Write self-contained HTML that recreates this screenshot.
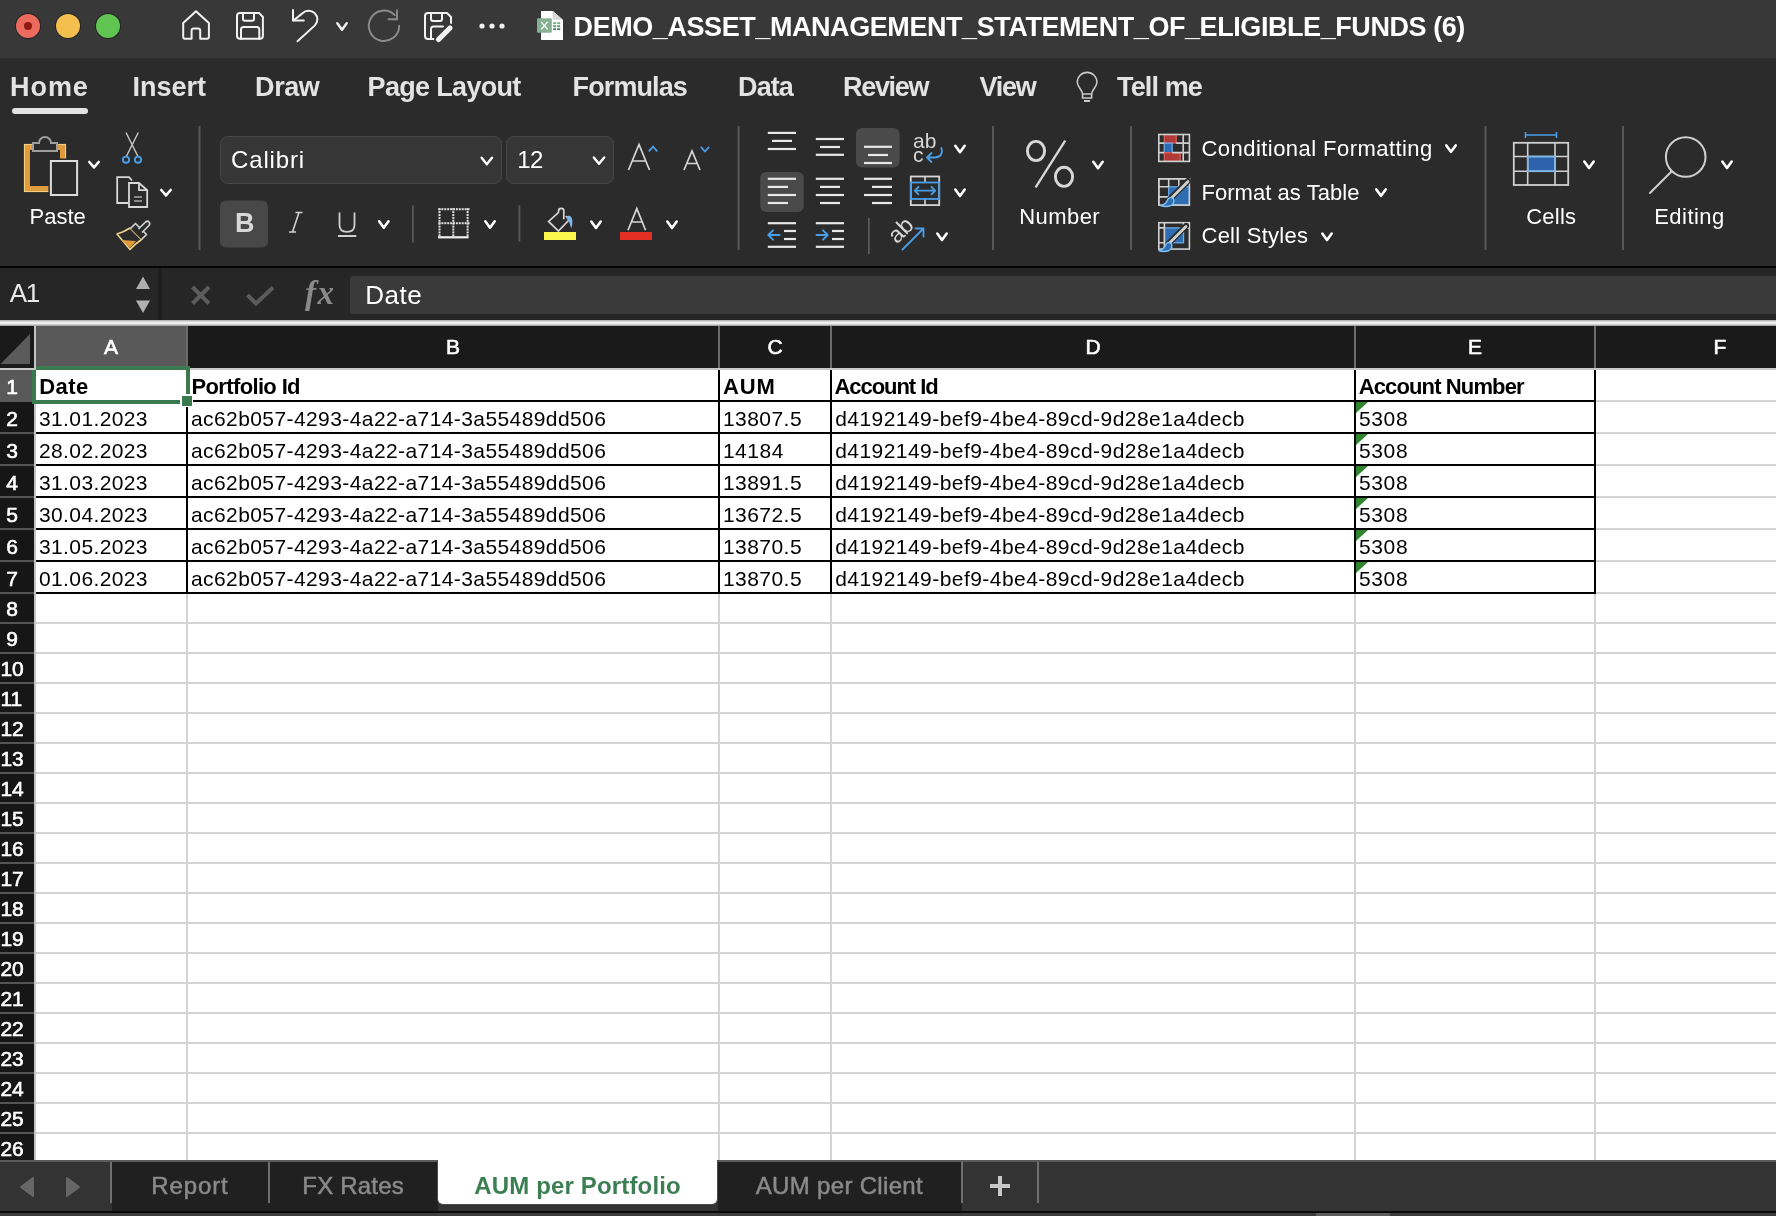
<!DOCTYPE html>
<html><head><meta charset="utf-8"><style>
html,body{margin:0;padding:0;}
body{width:1776px;height:1216px;overflow:hidden;position:relative;background:#2b2b2b;font-family:"Liberation Sans",sans-serif;}
#w{position:absolute;left:0;top:0;width:1776px;height:1216px;will-change:transform;}
#w>div,#w>span,#w>svg{position:absolute;}
.t{white-space:nowrap;}
</style></head><body>
<div id="w">
<div style="left:0px;top:0px;width:1776px;height:58px;background:#383838;"></div>
<div style="left:0px;top:58px;width:1776px;height:208px;background:#2b2b2b;"></div>
<div style="left:0px;top:266px;width:1776px;height:2px;background:#050505;"></div>
<div style="left:0px;top:268px;width:1776px;height:52px;background:#262626;"></div>
<div style="left:0px;top:320px;width:1776px;height:6px;background:#cfcfcf;background:linear-gradient(#a8a8a8,#f0f0f0 40%,#ececec 60%,#9a9a9a)"></div>
<svg style="left:0;top:0;position:absolute" width="1776" height="330" viewBox="0 0 1776 330"><g fill="none" stroke="#f2f2f2" stroke-width="2" stroke-linejoin="round" stroke-linecap="round"><path d="M191.6,38.8 H185 Q183.2,38.8 183.2,37 V23 L196,11.2 L208.9,23 V37 Q208.9,38.8 207,38.8 H200.2 V30.5 Q200.2,28.4 198,28.4 H193.8 Q191.6,28.4 191.6,30.5 Z"/><path d="M240,12.9 H259 L262.9,17 V35.8 Q262.9,38.8 260,38.8 H240 Q237,38.8 237,35.8 V15.9 Q237,12.9 240,12.9 Z"/><path d="M243,12.9 V19 Q243,20.8 245,20.8 H252 Q254,20.8 254,19 V12.9"/><path d="M241,38.8 V29.5 Q241,27 243.5,27 H256.8 Q259.3,27 259.3,29.5 V38.8"/><path d="M293,10 V20.6 H303.8"/><path d="M293.5,20.5 L302.35,13.35 A8.7,8.7 0 1 1 314.65,25.65 L297.5,41.3"/></g><path d="M337.3,23.3 L342,29.7 L346.7,23.3" fill="none" stroke="#f2f2f2" stroke-width="2.4" stroke-linecap="round" stroke-linejoin="round"/><g fill="none" stroke="#8c8c8c" stroke-width="1.9" stroke-linecap="round"><path d="M399.2,25.8 A15.2,15.2 0 1 1 394.8,15.1"/><path d="M397,10.2 V19.2 H388.5"/></g><g fill="none" stroke="#f2f2f2" stroke-width="2" stroke-linejoin="round" stroke-linecap="round"><path d="M436,39 H428 Q425,39 425,36 V16 Q425,13 428,13 H447 L451,17 V24"/><path d="M431,13 V19 Q431,21 433,21 H440 Q442,21 442,19 V13"/><path d="M431,39 V29 Q431,26.5 433.5,26.5 H443"/></g><path d="M438.5,39.5 L450,28" stroke="#383838" stroke-width="9" stroke-linecap="round"/><path d="M438.5,39.5 L450,28" stroke="#f2f2f2" stroke-width="5.2" stroke-linecap="round"/><circle cx="482" cy="26" r="2.6" fill="#f2f2f2"/><circle cx="492" cy="26" r="2.6" fill="#f2f2f2"/><circle cx="502" cy="26" r="2.6" fill="#f2f2f2"/><path d="M541,11 H552.7 L563,20 V40 H541 Z" fill="#ffffff"/><path d="M552.7,11 V19.8 H563 Z" fill="#d8d8d8"/><rect x="537" y="18.2" width="14.8" height="14.6" rx="1.2" fill="#86b293"/><path d="M541.2,21.8 L547.6,29.4 M547.6,21.8 L541.2,29.4" stroke="#fff" stroke-width="1.3"/><rect x="553.2" y="22.2" width="3" height="1.9" fill="#6fb187"/><rect x="557.2" y="22.2" width="3" height="1.9" fill="#6fb187"/><rect x="553.2" y="25.2" width="3" height="1.9" fill="#5e9f76"/><rect x="557.2" y="25.2" width="3" height="1.9" fill="#5e9f76"/><rect x="553.2" y="28.2" width="3" height="1.9" fill="#4f7d60"/><rect x="557.2" y="28.2" width="3" height="1.9" fill="#4f7d60"/><g fill="none" stroke="#c9c9c9" stroke-width="1.6"><path d="M1082.6,94 C1082.2,89.5 1077.3,87 1077.3,82.2 A9.8,9.8 0 1 1 1096.9,82.2 C1096.9,87 1092,89.5 1091.6,94 Z"/><path d="M1082.6,94 V98 H1091.6 V94"/></g><rect x="1084" y="100" width="6" height="2" fill="#c9c9c9"/><rect x="27" y="147" width="36" height="42" fill="none" stroke="#e09b3c" stroke-width="6"/><rect x="24.4" y="144.4" width="41.2" height="47.2" fill="none" stroke="#f5d68c" stroke-width="1"/><path d="M33,151 V143 H39 A6,6 0 0 1 51,143 H57 V151 Z" fill="#2b2b2b" stroke="#9e9e9e" stroke-width="2"/><rect x="50.9" y="161" width="26.2" height="34" fill="#2b2b2b" stroke="#2b2b2b" stroke-width="5"/><rect x="50.9" y="161" width="26.2" height="34" fill="none" stroke="#dcdcdc" stroke-width="2"/><path d="M89.3,162.0 L94,167.39999999999998 L98.7,162.0" fill="none" stroke="#ffffff" stroke-width="2.6" stroke-linecap="round" stroke-linejoin="round"/><path d="M126,132.5 L138,156.5 M138.3,132.5 L126.3,156.5" stroke="#c8c8c8" stroke-width="1.4"/><circle cx="126" cy="159.7" r="3.1" fill="none" stroke="#4a9ee8" stroke-width="1.9"/><circle cx="138" cy="159.7" r="3.1" fill="none" stroke="#4a9ee8" stroke-width="1.9"/><path d="M128.5,203 H117.2 V177.2 H129 L132,180.5" fill="none" stroke="#d8d8d8" stroke-width="1.8"/><path d="M129,183 H139 L147.2,190.2 V207 H129 Z" fill="none" stroke="#d8d8d8" stroke-width="1.8"/><path d="M139,183 V190.2 H147.2" fill="none" stroke="#d8d8d8" stroke-width="1.8"/><path d="M134,197 H142 M134,201 H142" stroke="#a8a8a8" stroke-width="1.7"/><path d="M161.3,190.0 L166,195.39999999999998 L170.7,190.0" fill="none" stroke="#ffffff" stroke-width="2.6" stroke-linecap="round" stroke-linejoin="round"/><path d="M117,234 Q124,232 130,228 L141.5,239.5 Q135,244 130,249.5 Z" fill="none" stroke="#f0d68a" stroke-width="1.6" stroke-linejoin="round"/><path d="M121.5,240 L136,241 Q132.5,245 130,248 Z" fill="#e09b3c"/><path d="M130.5,228.5 L135.5,223.5 L146.5,234.5 L141.5,239.5" fill="#2b2b2b" stroke="#d0d0d0" stroke-width="1.7" stroke-linejoin="round"/><path d="M138.5,229 L145.5,222 Q147.5,220.5 149,222 Q150.5,223.5 149,225.5 L142,232.5" fill="#2b2b2b" stroke="#d0d0d0" stroke-width="1.7" stroke-linejoin="round"/><rect x="198.5" y="126" width="2" height="124" fill="#585858"/><rect x="220.5" y="136.5" width="281" height="47" rx="7" fill="#363636" stroke="#474747" stroke-width="1"/><rect x="506.5" y="136.5" width="107" height="47" rx="7" fill="#363636" stroke="#474747" stroke-width="1"/><path d="M481.6,157.8 L486.8,164.2 L492.0,157.8" fill="none" stroke="#ffffff" stroke-width="2.4" stroke-linecap="round" stroke-linejoin="round"/><path d="M593.8,157.4 L599,163.79999999999998 L604.2,157.4" fill="none" stroke="#ffffff" stroke-width="2.4" stroke-linecap="round" stroke-linejoin="round"/><path d="M628.5,170 L639,144.5 L649.5,170 M632.3,161 H645.7" fill="none" stroke="#d6d6d6" stroke-width="1.7"/><path d="M648.8,151.3 L653,146.6 L657.2,151.3" fill="none" stroke="#4a9ee8" stroke-width="1.8"/><path d="M684,170 L692,151 L700,170 M687,163.5 H697" fill="none" stroke="#d6d6d6" stroke-width="1.7"/><path d="M700.8,146.8 L705,151.5 L709.2,146.8" fill="none" stroke="#4a9ee8" stroke-width="1.8"/><rect x="220" y="200.5" width="48" height="47" rx="6" fill="#484848"/><path d="M289,232 H296 M295.5,212.5 H302.5 M299,212.5 L292.5,232" fill="none" stroke="#d0d0d0" stroke-width="1.6"/><path d="M339.5,212.5 V225 Q339.5,231.8 347,231.8 Q354.5,231.8 354.5,225 V212.5" fill="none" stroke="#d0d0d0" stroke-width="1.8"/><rect x="338" y="235" width="18.3" height="2" fill="#d0d0d0"/><path d="M379.1,221.3 L383.8,227.7 L388.5,221.3" fill="none" stroke="#ffffff" stroke-width="2.6" stroke-linecap="round" stroke-linejoin="round"/><rect x="412" y="205.5" width="1.8" height="37" fill="#5a5a5a"/><rect x="438.5" y="208.2" width="2" height="2" fill="#e0e0e0"/><rect x="438.5" y="222.2" width="2" height="2" fill="#e0e0e0"/><rect x="441.4" y="208.2" width="2" height="2" fill="#e0e0e0"/><rect x="441.4" y="222.2" width="2" height="2" fill="#e0e0e0"/><rect x="444.3" y="208.2" width="2" height="2" fill="#e0e0e0"/><rect x="444.3" y="222.2" width="2" height="2" fill="#e0e0e0"/><rect x="447.2" y="208.2" width="2" height="2" fill="#e0e0e0"/><rect x="447.2" y="222.2" width="2" height="2" fill="#e0e0e0"/><rect x="450.1" y="208.2" width="2" height="2" fill="#e0e0e0"/><rect x="450.1" y="222.2" width="2" height="2" fill="#e0e0e0"/><rect x="453.0" y="208.2" width="2" height="2" fill="#e0e0e0"/><rect x="453.0" y="222.2" width="2" height="2" fill="#e0e0e0"/><rect x="455.9" y="208.2" width="2" height="2" fill="#e0e0e0"/><rect x="455.9" y="222.2" width="2" height="2" fill="#e0e0e0"/><rect x="458.8" y="208.2" width="2" height="2" fill="#e0e0e0"/><rect x="458.8" y="222.2" width="2" height="2" fill="#e0e0e0"/><rect x="461.7" y="208.2" width="2" height="2" fill="#e0e0e0"/><rect x="461.7" y="222.2" width="2" height="2" fill="#e0e0e0"/><rect x="464.6" y="208.2" width="2" height="2" fill="#e0e0e0"/><rect x="464.6" y="222.2" width="2" height="2" fill="#e0e0e0"/><rect x="467.5" y="208.2" width="2" height="2" fill="#e0e0e0"/><rect x="467.5" y="222.2" width="2" height="2" fill="#e0e0e0"/><rect x="438.5" y="208.2" width="2" height="2" fill="#e0e0e0"/><rect x="452.3" y="208.2" width="2" height="2" fill="#e0e0e0"/><rect x="466.6" y="208.2" width="2" height="2" fill="#e0e0e0"/><rect x="438.5" y="211.1" width="2" height="2" fill="#e0e0e0"/><rect x="452.3" y="211.1" width="2" height="2" fill="#e0e0e0"/><rect x="466.6" y="211.1" width="2" height="2" fill="#e0e0e0"/><rect x="438.5" y="214.0" width="2" height="2" fill="#e0e0e0"/><rect x="452.3" y="214.0" width="2" height="2" fill="#e0e0e0"/><rect x="466.6" y="214.0" width="2" height="2" fill="#e0e0e0"/><rect x="438.5" y="216.9" width="2" height="2" fill="#e0e0e0"/><rect x="452.3" y="216.9" width="2" height="2" fill="#e0e0e0"/><rect x="466.6" y="216.9" width="2" height="2" fill="#e0e0e0"/><rect x="438.5" y="219.8" width="2" height="2" fill="#e0e0e0"/><rect x="452.3" y="219.8" width="2" height="2" fill="#e0e0e0"/><rect x="466.6" y="219.8" width="2" height="2" fill="#e0e0e0"/><rect x="438.5" y="222.7" width="2" height="2" fill="#e0e0e0"/><rect x="452.3" y="222.7" width="2" height="2" fill="#e0e0e0"/><rect x="466.6" y="222.7" width="2" height="2" fill="#e0e0e0"/><rect x="438.5" y="225.6" width="2" height="2" fill="#e0e0e0"/><rect x="452.3" y="225.6" width="2" height="2" fill="#e0e0e0"/><rect x="466.6" y="225.6" width="2" height="2" fill="#e0e0e0"/><rect x="438.5" y="228.5" width="2" height="2" fill="#e0e0e0"/><rect x="452.3" y="228.5" width="2" height="2" fill="#e0e0e0"/><rect x="466.6" y="228.5" width="2" height="2" fill="#e0e0e0"/><rect x="438.5" y="231.4" width="2" height="2" fill="#e0e0e0"/><rect x="452.3" y="231.4" width="2" height="2" fill="#e0e0e0"/><rect x="466.6" y="231.4" width="2" height="2" fill="#e0e0e0"/><rect x="438.5" y="234.3" width="2" height="2" fill="#e0e0e0"/><rect x="452.3" y="234.3" width="2" height="2" fill="#e0e0e0"/><rect x="466.6" y="234.3" width="2" height="2" fill="#e0e0e0"/><rect x="438" y="236.2" width="30.6" height="2.2" fill="#f0f0f0"/><path d="M485.3,221.3 L490,227.7 L494.7,221.3" fill="none" stroke="#ffffff" stroke-width="2.6" stroke-linecap="round" stroke-linejoin="round"/><rect x="518.5" y="205.5" width="1.8" height="36" fill="#5a5a5a"/><path d="M558.6,212.3 L548.6,221.4 L558.4,231 L569.4,219.6 L565.8,216" fill="none" stroke="#d6d6d6" stroke-width="1.7" stroke-linejoin="miter"/><path d="M558.6,212.5 V210.8 Q558.6,208.4 561.2,208.4 Q563.8,208.4 563.8,210.8 V219.3" fill="none" stroke="#d6d6d6" stroke-width="1.7"/><path d="M566.8,216.2 Q571.6,214.6 572.4,220.5 Q572.7,224.8 571.2,228.6 Q570.3,223 566.8,218.6 Z" fill="#7db6ea"/><rect x="544" y="232" width="32" height="8" fill="#fbf64c"/><path d="M591.3,221.60000000000002 L596,228.0 L600.7,221.60000000000002" fill="none" stroke="#ffffff" stroke-width="2.6" stroke-linecap="round" stroke-linejoin="round"/><path d="M628,230.3 L636.8,208.6 L645.6,230.3 M631.4,222 H642.2" fill="none" stroke="#d6d6d6" stroke-width="1.7"/><rect x="620" y="232" width="32" height="8" fill="#e42f24"/><path d="M667.3,221.60000000000002 L672,228.0 L676.7,221.60000000000002" fill="none" stroke="#ffffff" stroke-width="2.6" stroke-linecap="round" stroke-linejoin="round"/><rect x="737.6" y="126" width="2" height="124" fill="#585858"/><line x1="767.8" y1="132.9" x2="796" y2="132.9" stroke="#e8e8e8" stroke-width="2.2"/><line x1="772" y1="140.9" x2="792" y2="140.9" stroke="#e8e8e8" stroke-width="2.2"/><line x1="767.8" y1="149" x2="796" y2="149" stroke="#e8e8e8" stroke-width="2.2"/><line x1="815.8" y1="139" x2="844" y2="139" stroke="#e8e8e8" stroke-width="2.2"/><line x1="820" y1="147" x2="840" y2="147" stroke="#e8e8e8" stroke-width="2.2"/><line x1="815.8" y1="154.8" x2="844" y2="154.8" stroke="#e8e8e8" stroke-width="2.2"/><rect x="856" y="128" width="43.6" height="39.6" rx="6" fill="#4a4a4a"/><line x1="864" y1="146.8" x2="892" y2="146.8" stroke="#e8e8e8" stroke-width="2.2"/><line x1="868" y1="155" x2="888" y2="155" stroke="#e8e8e8" stroke-width="2.2"/><line x1="864" y1="163" x2="892" y2="163" stroke="#e8e8e8" stroke-width="2.2"/><text x="913" y="147.5" font-family="Liberation Sans" font-size="21" fill="#d6d6d6">ab</text><text x="913" y="161.5" font-family="Liberation Sans" font-size="21" fill="#d6d6d6">c</text><path d="M941.5,148 Q943.5,157 935,157.5 H927.5 M931.5,153 L927,157.5 L931.5,162" fill="none" stroke="#4a9ee8" stroke-width="1.8" stroke-linecap="round" stroke-linejoin="round"/><path d="M955.3,145.8 L960,152.2 L964.7,145.8" fill="none" stroke="#ffffff" stroke-width="2.6" stroke-linecap="round" stroke-linejoin="round"/><rect x="760.2" y="172" width="43.6" height="40" rx="6" fill="#4a4a4a"/><line x1="767.8" y1="178.8" x2="796" y2="178.8" stroke="#e8e8e8" stroke-width="2.2"/><line x1="767.8" y1="186.9" x2="788" y2="186.9" stroke="#e8e8e8" stroke-width="2.2"/><line x1="767.8" y1="195" x2="796" y2="195" stroke="#e8e8e8" stroke-width="2.2"/><line x1="767.8" y1="203" x2="788" y2="203" stroke="#e8e8e8" stroke-width="2.2"/><line x1="815.8" y1="178.8" x2="844" y2="178.8" stroke="#e8e8e8" stroke-width="2.2"/><line x1="820" y1="186.9" x2="840" y2="186.9" stroke="#e8e8e8" stroke-width="2.2"/><line x1="815.8" y1="195" x2="844" y2="195" stroke="#e8e8e8" stroke-width="2.2"/><line x1="820" y1="203" x2="840" y2="203" stroke="#e8e8e8" stroke-width="2.2"/><line x1="864" y1="178.8" x2="892" y2="178.8" stroke="#e8e8e8" stroke-width="2.2"/><line x1="872" y1="186.9" x2="892" y2="186.9" stroke="#e8e8e8" stroke-width="2.2"/><line x1="864" y1="195" x2="892" y2="195" stroke="#e8e8e8" stroke-width="2.2"/><line x1="872" y1="203" x2="892" y2="203" stroke="#e8e8e8" stroke-width="2.2"/><rect x="910.8" y="176.5" width="28.4" height="28.6" fill="none" stroke="#d6d6d6" stroke-width="1.8"/><path d="M925,176.5 V182.5 M925,199 V205" stroke="#d6d6d6" stroke-width="1.6"/><rect x="910.8" y="182.5" width="28.4" height="16.5" fill="none" stroke="#4a9ee8" stroke-width="1.8"/><path d="M915,190.7 H935 M918.5,187 L914.8,190.7 L918.5,194.4 M931.5,187 L935.2,190.7 L931.5,194.4" fill="none" stroke="#4a9ee8" stroke-width="1.8" stroke-linecap="round" stroke-linejoin="round"/><path d="M955.3,189.60000000000002 L960,196.0 L964.7,189.60000000000002" fill="none" stroke="#ffffff" stroke-width="2.6" stroke-linecap="round" stroke-linejoin="round"/><line x1="767.8" y1="223.2" x2="796" y2="223.2" stroke="#e8e8e8" stroke-width="2.2"/><line x1="784" y1="231" x2="796" y2="231" stroke="#e8e8e8" stroke-width="2.2"/><line x1="784" y1="239" x2="796" y2="239" stroke="#e8e8e8" stroke-width="2.2"/><line x1="767.8" y1="246.8" x2="796" y2="246.8" stroke="#e8e8e8" stroke-width="2.2"/><path d="M768.5,235 H779.5 M773,230.3 L768.3,235 L773,239.7" fill="none" stroke="#4a9ee8" stroke-width="1.9" stroke-linecap="round" stroke-linejoin="round"/><line x1="815.8" y1="223.2" x2="844" y2="223.2" stroke="#e8e8e8" stroke-width="2.2"/><line x1="832" y1="231" x2="844" y2="231" stroke="#e8e8e8" stroke-width="2.2"/><line x1="832" y1="239" x2="844" y2="239" stroke="#e8e8e8" stroke-width="2.2"/><line x1="815.8" y1="246.8" x2="844" y2="246.8" stroke="#e8e8e8" stroke-width="2.2"/><path d="M816.5,235 H827.5 M823,230.3 L827.7,235 L823,239.7" fill="none" stroke="#4a9ee8" stroke-width="1.9" stroke-linecap="round" stroke-linejoin="round"/><rect x="868" y="218" width="1.8" height="36" fill="#5a5a5a"/><text x="0" y="0" font-family="Liberation Sans" font-size="23" fill="#d6d6d6" transform="translate(897,244.5) rotate(-45)">ab</text><path d="M902.5,249.5 L923,229 M915.5,228.5 H923.5 V236.5" fill="none" stroke="#4a9ee8" stroke-width="1.8" stroke-linecap="round" stroke-linejoin="round"/><path d="M937.3,233.5 L942,239.89999999999998 L946.7,233.5" fill="none" stroke="#ffffff" stroke-width="2.6" stroke-linecap="round" stroke-linejoin="round"/><rect x="992" y="126" width="2" height="124" fill="#585858"/><ellipse cx="1036" cy="151" rx="8.6" ry="9.6" fill="none" stroke="#d8d8d8" stroke-width="2.9"/><ellipse cx="1064" cy="176.8" rx="8.6" ry="9.6" fill="none" stroke="#d8d8d8" stroke-width="2.9"/><path d="M1065.2,140.6 L1035.6,187.4" stroke="#d8d8d8" stroke-width="2.3"/><path d="M1093.3,161.8 L1098,168.2 L1102.7,161.8" fill="none" stroke="#ffffff" stroke-width="2.6" stroke-linecap="round" stroke-linejoin="round"/><rect x="1130" y="126" width="2" height="124" fill="#585858"/><rect x="1164.2" y="134.5" width="12" height="8.6" fill="#b03a36" stroke="#df5f5a" stroke-width="1.2"/><rect x="1164.2" y="143.1" width="8" height="9.5" fill="#2f6db3" stroke="#6fb0ea" stroke-width="1.2"/><rect x="1164.2" y="152.6" width="16" height="8.8" fill="#b03a36" stroke="#df5f5a" stroke-width="1.2"/><path d="M1183.2,134.5 V161.4 M1158.8,143.1 H1164.2 M1176.2,143.1 H1189.4 M1158.8,152.6 H1164.2 M1172.2,152.6 H1189.4" stroke="#d0d0d0" stroke-width="1.6"/><rect x="1158.8" y="134.5" width="30.6" height="26.9" fill="none" stroke="#d0d0d0" stroke-width="1.6"/><path d="M1164.2,134.5 V161.4" stroke="#d0d0d0" stroke-width="1.0" opacity="0.0"/><rect x="1168.7" y="186.8" width="20.7" height="18.2" fill="#2f6db3" stroke="#6fb0ea" stroke-width="1.2"/><path d="M1168.7,178.8 V186.8 M1178.8,178.8 V186.8 M1158.8,186.8 H1168.7 M1158.8,196.9 H1168.7" stroke="#d0d0d0" stroke-width="1.6"/><path d="M1158.8,205 V178.8 H1189.4 V183" fill="none" stroke="#d0d0d0" stroke-width="1.6"/><rect x="1158.8" y="178.8" width="30.6" height="26.3" fill="none" stroke="#d0d0d0" stroke-width="1.6"/><path d="M1188,181 L1170,199" stroke="#2b2b2b" stroke-width="6" stroke-linecap="round"/><path d="M1188,181.5 L1171,198.5" stroke="#d0d0d0" stroke-width="2.8" stroke-linecap="round"/><path d="M1160.5,205.5 Q1166,205 1168,199 Q1171,196 1173.5,199 Q1175,203 1171,205.5 Q1166,207.5 1160.5,205.5 Z" fill="#2f6db3" stroke="#7fc0f0" stroke-width="1.4"/><rect x="1164.4" y="227.9" width="19.2" height="14.9" fill="#2f6db3" stroke="#6fb0ea" stroke-width="1.2"/><path d="M1164.4,222.7 V249 M1183.6,222.7 V227.9 M1158.8,227.9 H1164.4 M1183.6,227.9 H1189.4 M1158.8,242.8 H1164.4" stroke="#d0d0d0" stroke-width="1.6"/><rect x="1158.8" y="222.7" width="30.6" height="26.4" fill="none" stroke="#d0d0d0" stroke-width="1.6"/><path d="M1186,226 L1168,244" stroke="#2b2b2b" stroke-width="6" stroke-linecap="round"/><path d="M1186,226.5 L1169,243.5" stroke="#d0d0d0" stroke-width="2.8" stroke-linecap="round"/><path d="M1158.5,250.5 Q1164,250 1166,244 Q1169,241 1171.5,244 Q1173,248 1169,250.5 Q1164,252.5 1158.5,250.5 Z" fill="#2f6db3" stroke="#7fc0f0" stroke-width="1.4"/><path d="M1446.3,145.4 L1451,151.79999999999998 L1455.7,145.4" fill="none" stroke="#ffffff" stroke-width="2.6" stroke-linecap="round" stroke-linejoin="round"/><path d="M1376.3,189.4 L1381,195.79999999999998 L1385.7,189.4" fill="none" stroke="#ffffff" stroke-width="2.6" stroke-linecap="round" stroke-linejoin="round"/><path d="M1322.3,233.5 L1327,239.89999999999998 L1331.7,233.5" fill="none" stroke="#ffffff" stroke-width="2.6" stroke-linecap="round" stroke-linejoin="round"/><rect x="1484.5" y="126" width="2" height="124" fill="#585858"/><rect x="1527.7" y="156.5" width="27" height="14.8" fill="#2f62ad"/><path d="M1527.7,142.8 V185 M1555,142.8 V185 M1513.8,156.5 H1568.2 M1513.8,171.3 H1568.2" stroke="#d0d0d0" stroke-width="1.6"/><rect x="1527.7" y="156.5" width="27.3" height="14.8" fill="none" stroke="#7ab8ee" stroke-width="1.6"/><rect x="1513.8" y="142.8" width="54.4" height="42.2" fill="none" stroke="#d0d0d0" stroke-width="1.8"/><path d="M1525.5,135 H1556.5 M1525.5,132 V138 M1556.5,132 V138" stroke="#4a9ee8" stroke-width="1.6"/><path d="M1584.3,161.5 L1589,167.89999999999998 L1593.7,161.5" fill="none" stroke="#ffffff" stroke-width="2.6" stroke-linecap="round" stroke-linejoin="round"/><rect x="1622" y="126" width="2" height="124" fill="#585858"/><circle cx="1685.7" cy="157" r="19.8" fill="none" stroke="#d0d0d0" stroke-width="2"/><path d="M1671.5,171.5 L1650,193" stroke="#d0d0d0" stroke-width="2" stroke-linecap="round"/><path d="M1722.3,161.5 L1727,167.89999999999998 L1731.7,161.5" fill="none" stroke="#ffffff" stroke-width="2.6" stroke-linecap="round" stroke-linejoin="round"/><path d="M192.5,287 L209,303.5 M209,287 L192.5,303.5" stroke="#5c5c5c" stroke-width="4"/><path d="M247.5,295 L256,303.5 L273,287.5" fill="none" stroke="#5c5c5c" stroke-width="4"/><text x="305" y="303.5" font-family="Liberation Serif" font-style="italic" font-weight="bold" font-size="33" fill="#8a8a8a" letter-spacing="1.5">fx</text><path d="M136,289 L143,276.5 L150,289 Z" fill="#b0b0b0"/><path d="M136,300.5 L143,313 L150,300.5 Z" fill="#b0b0b0"/></svg>
<div style="left:16px;top:14px;width:24px;height:24px;border-radius:50%;background:#ed6a5e;box-shadow:0 0 0 1px rgba(0,0,0,0.35)"></div>
<div style="left:56px;top:14px;width:24px;height:24px;border-radius:50%;background:#f5bf4f;box-shadow:0 0 0 1px rgba(0,0,0,0.35)"></div>
<div style="left:96px;top:14px;width:24px;height:24px;border-radius:50%;background:#61c554;box-shadow:0 0 0 1px rgba(0,0,0,0.35)"></div>
<div style="left:24px;top:22px;width:8px;height:8px;border-radius:50%;background:#8f1a10"></div>
<span class="t" style="left:573.6px;top:14px;font-size:27px;line-height:27px;color:#ffffff;font-weight:bold;letter-spacing:-0.43px;">DEMO_ASSET_MANAGEMENT_STATEMENT_OF_ELIGIBLE_FUNDS (6)</span>
<span class="t" style="left:10.1px;top:74px;font-size:27px;line-height:27px;color:#e3e3e3;font-weight:bold;letter-spacing:0.90px;">Home</span>
<span class="t" style="left:132.6px;top:74px;font-size:27px;line-height:27px;color:#e3e3e3;font-weight:bold;letter-spacing:-0.04px;">Insert</span>
<span class="t" style="left:255.1px;top:74px;font-size:27px;line-height:27px;color:#e3e3e3;font-weight:bold;letter-spacing:-0.44px;">Draw</span>
<span class="t" style="left:367.6px;top:74px;font-size:27px;line-height:27px;color:#e3e3e3;font-weight:bold;letter-spacing:-0.68px;">Page Layout</span>
<span class="t" style="left:572.6px;top:74px;font-size:27px;line-height:27px;color:#e3e3e3;font-weight:bold;letter-spacing:-0.90px;">Formulas</span>
<span class="t" style="left:738.1px;top:74px;font-size:27px;line-height:27px;color:#e3e3e3;font-weight:bold;letter-spacing:-0.94px;">Data</span>
<span class="t" style="left:843.1px;top:74px;font-size:27px;line-height:27px;color:#e3e3e3;font-weight:bold;letter-spacing:-1.35px;">Review</span>
<span class="t" style="left:979.6px;top:74px;font-size:27px;line-height:27px;color:#e3e3e3;font-weight:bold;letter-spacing:-1.28px;">View</span>
<span class="t" style="left:1117.1px;top:74px;font-size:27px;line-height:27px;color:#e3e3e3;font-weight:bold;letter-spacing:-0.89px;">Tell me</span>
<div style="left:12px;top:108px;width:76px;height:6px;background:#e3e3e3;border-radius:3px"></div>
<div style="left:158px;top:268px;width:4px;height:52px;background:#1e1e1e;"></div>
<div style="left:350px;top:276px;width:1426px;height:38px;background:#3a3a3a;border-radius:3px 0 0 3px"></div>
<span class="t" style="left:9.7px;top:280px;font-size:26px;line-height:26px;color:#e8e8e8;letter-spacing:-1.20px;">A1</span>
<span class="t" style="left:365.2px;top:282px;font-size:26px;line-height:26px;color:#ffffff;letter-spacing:0.56px;">Date</span>
<div style="left:0px;top:326px;width:1776px;height:834px;background:#ffffff;"></div>
<div style="left:0px;top:326px;width:1776px;height:42px;background:#1a1a1a;"></div>
<div style="left:36px;top:326px;width:150px;height:42px;background:#595959;"></div>
<div style="left:0px;top:368px;width:1776px;height:2px;background:#c9c9c9;"></div>
<div style="left:0px;top:370px;width:34px;height:790px;background:#161616;"></div>
<div style="left:34px;top:326px;width:2px;height:834px;background:#c4c4c4;"></div>
<svg style="left:0px;top:326px;" width="34" height="42" viewBox="0 0 34 42"><polygon points="0.5,38 30,38 30,8" fill="#5b5b5b"/></svg>
<div style="left:186px;top:326px;width:2px;height:42px;background:#6b6b6b;"></div>
<div style="left:186px;top:370px;width:2px;height:790px;background:#d4d4d4;"></div>
<div style="left:718px;top:326px;width:2px;height:42px;background:#6b6b6b;"></div>
<div style="left:718px;top:370px;width:2px;height:790px;background:#d4d4d4;"></div>
<div style="left:830px;top:326px;width:2px;height:42px;background:#6b6b6b;"></div>
<div style="left:830px;top:370px;width:2px;height:790px;background:#d4d4d4;"></div>
<div style="left:1354px;top:326px;width:2px;height:42px;background:#6b6b6b;"></div>
<div style="left:1354px;top:370px;width:2px;height:790px;background:#d4d4d4;"></div>
<div style="left:1594px;top:326px;width:2px;height:42px;background:#6b6b6b;"></div>
<div style="left:1594px;top:370px;width:2px;height:790px;background:#d4d4d4;"></div>
<div style="left:36px;top:400px;width:1740px;height:2px;background:#d4d4d4;"></div>
<div style="left:0px;top:400px;width:34px;height:2px;background:#555555;"></div>
<div style="left:36px;top:432px;width:1740px;height:2px;background:#d4d4d4;"></div>
<div style="left:0px;top:432px;width:34px;height:2px;background:#555555;"></div>
<div style="left:36px;top:464px;width:1740px;height:2px;background:#d4d4d4;"></div>
<div style="left:0px;top:464px;width:34px;height:2px;background:#555555;"></div>
<div style="left:36px;top:496px;width:1740px;height:2px;background:#d4d4d4;"></div>
<div style="left:0px;top:496px;width:34px;height:2px;background:#555555;"></div>
<div style="left:36px;top:528px;width:1740px;height:2px;background:#d4d4d4;"></div>
<div style="left:0px;top:528px;width:34px;height:2px;background:#555555;"></div>
<div style="left:36px;top:560px;width:1740px;height:2px;background:#d4d4d4;"></div>
<div style="left:0px;top:560px;width:34px;height:2px;background:#555555;"></div>
<div style="left:36px;top:592px;width:1740px;height:2px;background:#d4d4d4;"></div>
<div style="left:0px;top:592px;width:34px;height:2px;background:#555555;"></div>
<div style="left:36px;top:622px;width:1740px;height:2px;background:#d4d4d4;"></div>
<div style="left:0px;top:622px;width:34px;height:2px;background:#555555;"></div>
<div style="left:36px;top:652px;width:1740px;height:2px;background:#d4d4d4;"></div>
<div style="left:0px;top:652px;width:34px;height:2px;background:#555555;"></div>
<div style="left:36px;top:682px;width:1740px;height:2px;background:#d4d4d4;"></div>
<div style="left:0px;top:682px;width:34px;height:2px;background:#555555;"></div>
<div style="left:36px;top:712px;width:1740px;height:2px;background:#d4d4d4;"></div>
<div style="left:0px;top:712px;width:34px;height:2px;background:#555555;"></div>
<div style="left:36px;top:742px;width:1740px;height:2px;background:#d4d4d4;"></div>
<div style="left:0px;top:742px;width:34px;height:2px;background:#555555;"></div>
<div style="left:36px;top:772px;width:1740px;height:2px;background:#d4d4d4;"></div>
<div style="left:0px;top:772px;width:34px;height:2px;background:#555555;"></div>
<div style="left:36px;top:802px;width:1740px;height:2px;background:#d4d4d4;"></div>
<div style="left:0px;top:802px;width:34px;height:2px;background:#555555;"></div>
<div style="left:36px;top:832px;width:1740px;height:2px;background:#d4d4d4;"></div>
<div style="left:0px;top:832px;width:34px;height:2px;background:#555555;"></div>
<div style="left:36px;top:862px;width:1740px;height:2px;background:#d4d4d4;"></div>
<div style="left:0px;top:862px;width:34px;height:2px;background:#555555;"></div>
<div style="left:36px;top:892px;width:1740px;height:2px;background:#d4d4d4;"></div>
<div style="left:0px;top:892px;width:34px;height:2px;background:#555555;"></div>
<div style="left:36px;top:922px;width:1740px;height:2px;background:#d4d4d4;"></div>
<div style="left:0px;top:922px;width:34px;height:2px;background:#555555;"></div>
<div style="left:36px;top:952px;width:1740px;height:2px;background:#d4d4d4;"></div>
<div style="left:0px;top:952px;width:34px;height:2px;background:#555555;"></div>
<div style="left:36px;top:982px;width:1740px;height:2px;background:#d4d4d4;"></div>
<div style="left:0px;top:982px;width:34px;height:2px;background:#555555;"></div>
<div style="left:36px;top:1012px;width:1740px;height:2px;background:#d4d4d4;"></div>
<div style="left:0px;top:1012px;width:34px;height:2px;background:#555555;"></div>
<div style="left:36px;top:1042px;width:1740px;height:2px;background:#d4d4d4;"></div>
<div style="left:0px;top:1042px;width:34px;height:2px;background:#555555;"></div>
<div style="left:36px;top:1072px;width:1740px;height:2px;background:#d4d4d4;"></div>
<div style="left:0px;top:1072px;width:34px;height:2px;background:#555555;"></div>
<div style="left:36px;top:1102px;width:1740px;height:2px;background:#d4d4d4;"></div>
<div style="left:0px;top:1102px;width:34px;height:2px;background:#555555;"></div>
<div style="left:36px;top:1132px;width:1740px;height:2px;background:#d4d4d4;"></div>
<div style="left:0px;top:1132px;width:34px;height:2px;background:#555555;"></div>
<div style="left:36px;top:1162px;width:1740px;height:2px;background:#d4d4d4;"></div>
<div style="left:0px;top:1162px;width:34px;height:2px;background:#555555;"></div>
<div style="left:0px;top:370px;width:34px;height:32px;background:#595959;"></div>
<span class="t" style="left:104.0px;top:336px;font-size:21px;line-height:21px;color:#ffffff;-webkit-text-stroke:0.6px #fff;">A</span>
<span class="t" style="left:446.0px;top:336px;font-size:21px;line-height:21px;color:#ffffff;-webkit-text-stroke:0.6px #fff;">B</span>
<span class="t" style="left:767.4px;top:336px;font-size:21px;line-height:21px;color:#ffffff;-webkit-text-stroke:0.6px #fff;">C</span>
<span class="t" style="left:1085.4px;top:336px;font-size:21px;line-height:21px;color:#ffffff;-webkit-text-stroke:0.6px #fff;">D</span>
<span class="t" style="left:1468.0px;top:336px;font-size:21px;line-height:21px;color:#ffffff;-webkit-text-stroke:0.6px #fff;">E</span>
<span class="t" style="left:1713.6px;top:336px;font-size:21px;line-height:21px;color:#ffffff;-webkit-text-stroke:0.6px #fff;">F</span>
<span class="t" style="left:6.2px;top:376px;font-size:21px;line-height:21px;color:#ffffff;-webkit-text-stroke:0.6px #fff;">1</span>
<span class="t" style="left:6.2px;top:408px;font-size:21px;line-height:21px;color:#ffffff;-webkit-text-stroke:0.6px #fff;">2</span>
<span class="t" style="left:6.2px;top:440px;font-size:21px;line-height:21px;color:#ffffff;-webkit-text-stroke:0.6px #fff;">3</span>
<span class="t" style="left:6.2px;top:472px;font-size:21px;line-height:21px;color:#ffffff;-webkit-text-stroke:0.6px #fff;">4</span>
<span class="t" style="left:6.2px;top:504px;font-size:21px;line-height:21px;color:#ffffff;-webkit-text-stroke:0.6px #fff;">5</span>
<span class="t" style="left:6.2px;top:536px;font-size:21px;line-height:21px;color:#ffffff;-webkit-text-stroke:0.6px #fff;">6</span>
<span class="t" style="left:6.2px;top:568px;font-size:21px;line-height:21px;color:#ffffff;-webkit-text-stroke:0.6px #fff;">7</span>
<span class="t" style="left:6.2px;top:598px;font-size:21px;line-height:21px;color:#ffffff;-webkit-text-stroke:0.6px #fff;">8</span>
<span class="t" style="left:6.2px;top:628px;font-size:21px;line-height:21px;color:#ffffff;-webkit-text-stroke:0.6px #fff;">9</span>
<span class="t" style="left:0.4px;top:658px;font-size:21px;line-height:21px;color:#ffffff;-webkit-text-stroke:0.6px #fff;">10</span>
<span class="t" style="left:0.4px;top:688px;font-size:21px;line-height:21px;color:#ffffff;-webkit-text-stroke:0.6px #fff;">11</span>
<span class="t" style="left:0.4px;top:718px;font-size:21px;line-height:21px;color:#ffffff;-webkit-text-stroke:0.6px #fff;">12</span>
<span class="t" style="left:0.4px;top:748px;font-size:21px;line-height:21px;color:#ffffff;-webkit-text-stroke:0.6px #fff;">13</span>
<span class="t" style="left:0.4px;top:778px;font-size:21px;line-height:21px;color:#ffffff;-webkit-text-stroke:0.6px #fff;">14</span>
<span class="t" style="left:0.4px;top:808px;font-size:21px;line-height:21px;color:#ffffff;-webkit-text-stroke:0.6px #fff;">15</span>
<span class="t" style="left:0.4px;top:838px;font-size:21px;line-height:21px;color:#ffffff;-webkit-text-stroke:0.6px #fff;">16</span>
<span class="t" style="left:0.4px;top:868px;font-size:21px;line-height:21px;color:#ffffff;-webkit-text-stroke:0.6px #fff;">17</span>
<span class="t" style="left:0.4px;top:898px;font-size:21px;line-height:21px;color:#ffffff;-webkit-text-stroke:0.6px #fff;">18</span>
<span class="t" style="left:0.4px;top:928px;font-size:21px;line-height:21px;color:#ffffff;-webkit-text-stroke:0.6px #fff;">19</span>
<span class="t" style="left:0.4px;top:958px;font-size:21px;line-height:21px;color:#ffffff;-webkit-text-stroke:0.6px #fff;">20</span>
<span class="t" style="left:0.4px;top:988px;font-size:21px;line-height:21px;color:#ffffff;-webkit-text-stroke:0.6px #fff;">21</span>
<span class="t" style="left:0.4px;top:1018px;font-size:21px;line-height:21px;color:#ffffff;-webkit-text-stroke:0.6px #fff;">22</span>
<span class="t" style="left:0.4px;top:1048px;font-size:21px;line-height:21px;color:#ffffff;-webkit-text-stroke:0.6px #fff;">23</span>
<span class="t" style="left:0.4px;top:1078px;font-size:21px;line-height:21px;color:#ffffff;-webkit-text-stroke:0.6px #fff;">24</span>
<span class="t" style="left:0.4px;top:1108px;font-size:21px;line-height:21px;color:#ffffff;-webkit-text-stroke:0.6px #fff;">25</span>
<span class="t" style="left:0.4px;top:1138px;font-size:21px;line-height:21px;color:#ffffff;-webkit-text-stroke:0.6px #fff;">26</span>
<div style="left:186px;top:370px;width:2px;height:224px;background:#000;"></div>
<div style="left:718px;top:370px;width:2px;height:224px;background:#000;"></div>
<div style="left:830px;top:370px;width:2px;height:224px;background:#000;"></div>
<div style="left:1354px;top:370px;width:2px;height:224px;background:#000;"></div>
<div style="left:1594px;top:370px;width:2px;height:224px;background:#000;"></div>
<div style="left:36px;top:400px;width:1560px;height:2px;background:#000;"></div>
<div style="left:36px;top:432px;width:1560px;height:2px;background:#000;"></div>
<div style="left:36px;top:464px;width:1560px;height:2px;background:#000;"></div>
<div style="left:36px;top:496px;width:1560px;height:2px;background:#000;"></div>
<div style="left:36px;top:528px;width:1560px;height:2px;background:#000;"></div>
<div style="left:36px;top:560px;width:1560px;height:2px;background:#000;"></div>
<div style="left:36px;top:592px;width:1560px;height:2px;background:#000;"></div>
<span class="t" style="left:39.3px;top:376px;font-size:22px;line-height:22px;color:#000;font-weight:bold;letter-spacing:0.41px;">Date</span>
<span class="t" style="left:191.5px;top:376px;font-size:22px;line-height:22px;color:#000;font-weight:bold;letter-spacing:-0.64px;">Portfolio Id</span>
<span class="t" style="left:722.9px;top:376px;font-size:22px;line-height:22px;color:#000;font-weight:bold;letter-spacing:0.95px;">AUM</span>
<span class="t" style="left:834.5px;top:376px;font-size:22px;line-height:22px;color:#000;font-weight:bold;letter-spacing:-1.05px;">Account Id</span>
<span class="t" style="left:1358.7px;top:376px;font-size:22px;line-height:22px;color:#000;font-weight:bold;letter-spacing:-0.87px;">Account Number</span>
<span class="t" style="left:39.0px;top:408px;font-size:21px;line-height:21px;color:#000;letter-spacing:0.38px;">31.01.2023</span>
<span class="t" style="left:191.0px;top:408px;font-size:21px;line-height:21px;color:#000;letter-spacing:0.41px;">ac62b057-4293-4a22-a714-3a55489dd506</span>
<span class="t" style="left:722.9px;top:408px;font-size:21px;line-height:21px;color:#000;letter-spacing:0.46px;">13807.5</span>
<span class="t" style="left:835.2px;top:408px;font-size:21px;line-height:21px;color:#000;letter-spacing:0.45px;">d4192149-bef9-4be4-89cd-9d28e1a4decb</span>
<span class="t" style="left:1359.0px;top:408px;font-size:21px;line-height:21px;color:#000;letter-spacing:0.63px;">5308</span>
<svg style="left:1356px;top:402px;" width="12" height="11" viewBox="0 0 12 11"><polygon points="0,0 12,0 0,11" fill="#2e8530"/></svg>
<span class="t" style="left:39.0px;top:440px;font-size:21px;line-height:21px;color:#000;letter-spacing:0.38px;">28.02.2023</span>
<span class="t" style="left:191.0px;top:440px;font-size:21px;line-height:21px;color:#000;letter-spacing:0.41px;">ac62b057-4293-4a22-a714-3a55489dd506</span>
<span class="t" style="left:722.9px;top:440px;font-size:21px;line-height:21px;color:#000;letter-spacing:0.54px;">14184</span>
<span class="t" style="left:835.2px;top:440px;font-size:21px;line-height:21px;color:#000;letter-spacing:0.45px;">d4192149-bef9-4be4-89cd-9d28e1a4decb</span>
<span class="t" style="left:1359.0px;top:440px;font-size:21px;line-height:21px;color:#000;letter-spacing:0.63px;">5308</span>
<svg style="left:1356px;top:434px;" width="12" height="11" viewBox="0 0 12 11"><polygon points="0,0 12,0 0,11" fill="#2e8530"/></svg>
<span class="t" style="left:39.0px;top:472px;font-size:21px;line-height:21px;color:#000;letter-spacing:0.38px;">31.03.2023</span>
<span class="t" style="left:191.0px;top:472px;font-size:21px;line-height:21px;color:#000;letter-spacing:0.41px;">ac62b057-4293-4a22-a714-3a55489dd506</span>
<span class="t" style="left:722.9px;top:472px;font-size:21px;line-height:21px;color:#000;letter-spacing:0.46px;">13891.5</span>
<span class="t" style="left:835.2px;top:472px;font-size:21px;line-height:21px;color:#000;letter-spacing:0.45px;">d4192149-bef9-4be4-89cd-9d28e1a4decb</span>
<span class="t" style="left:1359.0px;top:472px;font-size:21px;line-height:21px;color:#000;letter-spacing:0.63px;">5308</span>
<svg style="left:1356px;top:466px;" width="12" height="11" viewBox="0 0 12 11"><polygon points="0,0 12,0 0,11" fill="#2e8530"/></svg>
<span class="t" style="left:39.0px;top:504px;font-size:21px;line-height:21px;color:#000;letter-spacing:0.38px;">30.04.2023</span>
<span class="t" style="left:191.0px;top:504px;font-size:21px;line-height:21px;color:#000;letter-spacing:0.41px;">ac62b057-4293-4a22-a714-3a55489dd506</span>
<span class="t" style="left:722.9px;top:504px;font-size:21px;line-height:21px;color:#000;letter-spacing:0.46px;">13672.5</span>
<span class="t" style="left:835.2px;top:504px;font-size:21px;line-height:21px;color:#000;letter-spacing:0.45px;">d4192149-bef9-4be4-89cd-9d28e1a4decb</span>
<span class="t" style="left:1359.0px;top:504px;font-size:21px;line-height:21px;color:#000;letter-spacing:0.63px;">5308</span>
<svg style="left:1356px;top:498px;" width="12" height="11" viewBox="0 0 12 11"><polygon points="0,0 12,0 0,11" fill="#2e8530"/></svg>
<span class="t" style="left:39.0px;top:536px;font-size:21px;line-height:21px;color:#000;letter-spacing:0.38px;">31.05.2023</span>
<span class="t" style="left:191.0px;top:536px;font-size:21px;line-height:21px;color:#000;letter-spacing:0.41px;">ac62b057-4293-4a22-a714-3a55489dd506</span>
<span class="t" style="left:722.9px;top:536px;font-size:21px;line-height:21px;color:#000;letter-spacing:0.46px;">13870.5</span>
<span class="t" style="left:835.2px;top:536px;font-size:21px;line-height:21px;color:#000;letter-spacing:0.45px;">d4192149-bef9-4be4-89cd-9d28e1a4decb</span>
<span class="t" style="left:1359.0px;top:536px;font-size:21px;line-height:21px;color:#000;letter-spacing:0.63px;">5308</span>
<svg style="left:1356px;top:530px;" width="12" height="11" viewBox="0 0 12 11"><polygon points="0,0 12,0 0,11" fill="#2e8530"/></svg>
<span class="t" style="left:39.0px;top:568px;font-size:21px;line-height:21px;color:#000;letter-spacing:0.38px;">01.06.2023</span>
<span class="t" style="left:191.0px;top:568px;font-size:21px;line-height:21px;color:#000;letter-spacing:0.41px;">ac62b057-4293-4a22-a714-3a55489dd506</span>
<span class="t" style="left:722.9px;top:568px;font-size:21px;line-height:21px;color:#000;letter-spacing:0.46px;">13870.5</span>
<span class="t" style="left:835.2px;top:568px;font-size:21px;line-height:21px;color:#000;letter-spacing:0.45px;">d4192149-bef9-4be4-89cd-9d28e1a4decb</span>
<span class="t" style="left:1359.0px;top:568px;font-size:21px;line-height:21px;color:#000;letter-spacing:0.63px;">5308</span>
<svg style="left:1356px;top:562px;" width="12" height="11" viewBox="0 0 12 11"><polygon points="0,0 12,0 0,11" fill="#2e8530"/></svg>
<div style="left:36px;top:366px;width:154px;height:4px;background:#3a7a4e;"></div>
<div style="left:32px;top:370px;width:4px;height:34px;background:#3a7a4e;"></div>
<div style="left:186px;top:366px;width:4px;height:28px;background:#3a7a4e;"></div>
<div style="left:32px;top:400px;width:148px;height:4px;background:#3a7a4e;"></div>
<div style="left:180px;top:394px;width:13px;height:13px;background:#ffffff;"></div>
<div style="left:182px;top:396px;width:10px;height:10px;background:#3a7a4e;"></div>
<div style="left:0px;top:1160px;width:1776px;height:2px;background:#5a5a5a;"></div>
<div style="left:0px;top:1162px;width:1776px;height:49px;background:#333333;"></div>
<div style="left:112px;top:1162px;width:326px;height:49px;background:#202020;"></div>
<div style="left:718px;top:1162px;width:244px;height:49px;background:#202020;"></div>
<div style="left:110px;top:1162px;width:2px;height:41px;background:#6e6e6e;"></div>
<div style="left:268px;top:1162px;width:2px;height:41px;background:#6e6e6e;"></div>
<div style="left:961px;top:1162px;width:2px;height:41px;background:#6e6e6e;"></div>
<div style="left:1037px;top:1162px;width:2px;height:41px;background:#6e6e6e;"></div>
<div style="left:437px;top:1160px;width:281px;height:45px;background:#4a4a4a;border-radius:0 0 6px 6px"></div>
<div style="left:438px;top:1160px;width:279px;height:44px;background:#fff;border-radius:0 0 5px 5px"></div>
<div style="left:0px;top:1211px;width:1776px;height:2px;background:#0a0a0a;"></div>
<div style="left:0px;top:1213px;width:1776px;height:3px;background:#3c3c3c;"></div>
<div style="left:1316px;top:1213px;width:74px;height:3px;background:#5c5c5c;"></div>
<svg style="left:18px;top:1176px;" width="18" height="22" viewBox="0 0 18 22"><path d="M15,2 L15,20 L3,11 Z" fill="#666" stroke="#666" stroke-width="2" stroke-linejoin="round"/></svg>
<svg style="left:64px;top:1176px;" width="18" height="22" viewBox="0 0 18 22"><path d="M3,2 L3,20 L15,11 Z" fill="#666" stroke="#666" stroke-width="2" stroke-linejoin="round"/></svg>
<span class="t" style="left:151.3px;top:1174px;font-size:24px;line-height:24px;color:#8a8a8a;letter-spacing:0.87px;-webkit-text-stroke:0.5px #8a8a8a;">Report</span>
<span class="t" style="left:302.3px;top:1174px;font-size:24px;line-height:24px;color:#8a8a8a;letter-spacing:0.20px;-webkit-text-stroke:0.5px #8a8a8a;">FX Rates</span>
<span class="t" style="left:474.3px;top:1174px;font-size:24px;line-height:24px;color:#3c7f53;font-weight:bold;letter-spacing:0.15px;">AUM per Portfolio</span>
<span class="t" style="left:755.8px;top:1174px;font-size:24px;line-height:24px;color:#8a8a8a;letter-spacing:0.32px;-webkit-text-stroke:0.5px #8a8a8a;">AUM per Client</span>
<div style="left:990px;top:1184px;width:20px;height:4px;background:#c8c8c8;"></div>
<div style="left:998px;top:1176px;width:4px;height:20px;background:#c8c8c8;"></div>
<span class="t" style="left:29.5px;top:206px;font-size:22px;line-height:22px;color:#ffffff;letter-spacing:-0.01px;">Paste</span>
<span class="t" style="left:231.0px;top:148px;font-size:24px;line-height:24px;color:#ffffff;letter-spacing:0.85px;">Calibri</span>
<span class="t" style="left:517.3px;top:148px;font-size:24px;line-height:24px;color:#ffffff;letter-spacing:-0.70px;">12</span>
<span class="t" style="left:235.1px;top:210px;font-size:27px;line-height:27px;color:#d8d8d8;font-weight:bold;">B</span>
<span class="t" style="left:1019.2px;top:206px;font-size:22px;line-height:22px;color:#ffffff;letter-spacing:0.45px;">Number</span>
<span class="t" style="left:1201.5px;top:138px;font-size:22px;line-height:22px;color:#ffffff;letter-spacing:0.45px;">Conditional Formatting</span>
<span class="t" style="left:1201.5px;top:182px;font-size:22px;line-height:22px;color:#ffffff;letter-spacing:0.04px;">Format as Table</span>
<span class="t" style="left:1201.5px;top:225px;font-size:22px;line-height:22px;color:#ffffff;letter-spacing:0.25px;">Cell Styles</span>
<span class="t" style="left:1526.2px;top:206px;font-size:22px;line-height:22px;color:#ffffff;letter-spacing:0.25px;">Cells</span>
<span class="t" style="left:1654.2px;top:206px;font-size:22px;line-height:22px;color:#ffffff;letter-spacing:0.47px;">Editing</span>
</div></body></html>
